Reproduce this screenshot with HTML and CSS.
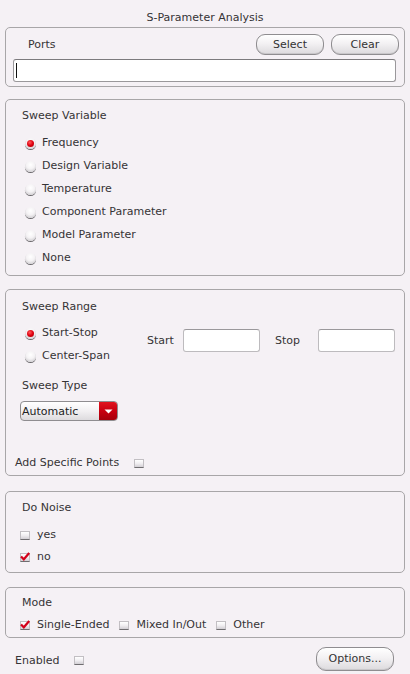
FILE: index.html
```html
<!DOCTYPE html>
<html>
<head>
<meta charset="utf-8">
<link rel="stylesheet" href="styles.css">
</head>
<body>
<div class="title">S-Parameter Analysis</div>

<div class="group g-ports">
  <div class="ports-row">
    <span class="ports-label">Ports</span>
    <div class="btns">
      <div class="btn btn-sm">Select</div>
      <div class="btn btn-sm">Clear</div>
    </div>
  </div>
  <div class="field ports-field"><span class="caret"></span></div>
</div>

<div class="group g-var">
  <div class="glabel">Sweep Variable</div>
  <div class="radios">
    <div class="radio-row"><span class="radio on"></span><span>Frequency</span></div>
    <div class="radio-row"><span class="radio"></span><span>Design Variable</span></div>
    <div class="radio-row"><span class="radio"></span><span>Temperature</span></div>
    <div class="radio-row"><span class="radio"></span><span>Component Parameter</span></div>
    <div class="radio-row"><span class="radio"></span><span>Model Parameter</span></div>
    <div class="radio-row"><span class="radio"></span><span>None</span></div>
  </div>
</div>

<div class="group g-range">
  <div class="glabel">Sweep Range</div>
  <div class="range-top">
    <div class="radios range-radios">
      <div class="radio-row"><span class="radio on"></span><span>Start-Stop</span></div>
      <div class="radio-row"><span class="radio"></span><span>Center-Span</span></div>
    </div>
    <div class="range-fields">
      <span class="f-label start-l">Start</span>
      <div class="field range-field"></div>
      <span class="f-label stop-l">Stop</span>
      <div class="field range-field"></div>
    </div>
  </div>
  <div class="glabel type-label">Sweep Type</div>
  <div class="combo">
    <span class="combo-text">Automatic</span>
    <span class="combo-arrow"><svg width="9" height="5" viewBox="0 0 9 5"><path d="M0.5 0.5 L8.5 0.5 L4.5 4.5 Z" fill="#fff"/></svg></span>
  </div>
  <div class="add-row">
    <span>Add Specific Points</span>
    <span class="check add-check"></span>
  </div>
</div>

<div class="group g-noise">
  <div class="glabel">Do Noise</div>
  <div class="checks">
    <div class="check-row"><span class="check"></span><span>yes</span></div>
    <div class="check-row"><span class="check on"><svg width="10" height="9" viewBox="0 0 10 9"><path d="M1 4.5 L3.8 7.3 L9.2 1" fill="none" stroke="#d3001a" stroke-width="2.2"/></svg></span><span>no</span></div>
  </div>
</div>

<div class="group g-mode">
  <div class="glabel">Mode</div>
  <div class="mode-row">
    <div class="mode-item m1"><span class="check on"><svg width="10" height="9" viewBox="0 0 10 9"><path d="M1 4.5 L3.8 7.3 L9.2 1" fill="none" stroke="#d3001a" stroke-width="2.2"/></svg></span><span>Single-Ended</span></div>
    <div class="mode-item m2"><span class="check"></span><span>Mixed In/Out</span></div>
    <div class="mode-item m3"><span class="check"></span><span>Other</span></div>
  </div>
</div>

<div class="footer">
  <div class="enabled"><span>Enabled</span><span class="check en-check"></span></div>
  <div class="btn btn-opt">Options...</div>
</div>
</body>
</html>
```

FILE: styles.css
```css
* { box-sizing: border-box; }
html, body { margin: 0; padding: 0; }
body {
  width: 410px;
  height: 674px;
  overflow: hidden;
  background: #f5f1f5;
  font-family: "DejaVu Sans", "Liberation Sans", sans-serif;
  font-size: 11px;
  color: #363436;
  line-height: 14px;
}
.title {
  height: 27px;
  padding-top: 11px;
  text-align: center;
}
.group {
  margin: 0 5px;
  border: 1px solid #a8a6a8;
  border-radius: 5px;
}
/* Ports */
.g-ports { height: 60px; padding: 6px 5px 4px 7px; }
.ports-row { display: flex; align-items: center; justify-content: space-between; height: 21px; }
.ports-label { padding-left: 15px; }
.btns { display: flex; gap: 7px; }
.btn {
  display: flex; align-items: center; justify-content: center;
  border: 1px solid #8f8d90;
  border-radius: 9px;
  background: linear-gradient(#ffffff 0%, #f3f1f3 45%, #dcdadd 100%);
  box-shadow: inset 0 -1px 0 #c9c7ca;
  color: #333;
}
.btn-sm { width: 68px; height: 21px; }
.field {
  background: #fff;
  border: 1px solid #9a989b;
  border-top-color: #7c7a7d;
  border-radius: 3px;
}
.ports-field { margin-top: 4px; height: 23px; margin-right: 3px; position: relative; }
.caret { position: absolute; left: 2px; top: 3px; width: 1px; height: 15px; background: #111; }
/* Labels */
.glabel { padding-left: 16px; height: 14px; line-height: 16px; }
/* Sweep variable */
.g-var { height: 177px; margin-top: 12px; padding-top: 8px; }
.radios { margin-top: 9px; padding-left: 19px; }
.radio-row { display: flex; align-items: center; height: 23px; padding-top: 1px; }
.radio {
  width: 11px; height: 11px; border-radius: 50%;
  margin-right: 6px;
  background: radial-gradient(circle at 50% 35%, #ffffff 0%, #f4f2f4 45%, #d6d4d7 75%, #8e8c8f 100%);
  box-shadow: 0 1px 0 #6d6b6e;
  position: relative;
  flex: none;
}
.radio.on::after {
  content: "";
  position: absolute; left: 2px; top: 2px;
  width: 7px; height: 7px; border-radius: 50%;
  background: radial-gradient(circle at 40% 35%, #ff5a5a 0%, #e00010 50%, #9a0008 100%);
}
/* Sweep range */
.g-range { height: 187px; margin-top: 13px; padding-top: 9px; }
.range-top { display: flex; margin-top: 8px; }
.range-radios { margin-top: 0; width: 141px; flex: none; }
.range-fields { display: flex; align-items: center; margin-top: 8px; height: 23px; }
.f-label { flex: none; padding-top: 1px; }
.start-l { width: 36px; }
.stop-l { width: 43px; margin-left: 15px; }
.range-field { width: 77px; height: 23px; border-color: #bdbbbe; border-top-color: #9a989b; }
.type-label { margin-top: 11px; }
.combo {
  margin-top: 9px; margin-left: 14px;
  width: 98px; height: 20px;
  display: flex;
  border: 1px solid #8f8d90;
  border-radius: 4px;
  overflow: hidden;
  background: linear-gradient(#ffffff 0%, #f2f0f2 50%, #dddbde 100%);
}
.combo-text { flex: 1; padding-left: 1px; line-height: 19px; color: #222; }
.combo-arrow {
  width: 18px; flex: none;
  display: flex; align-items: center; justify-content: center;
  background: linear-gradient(#e0141e 0%, #c80010 50%, #a5000b 100%);
}
.add-row { display: flex; align-items: center; margin-top: 35px; height: 14px; padding-left: 9px; line-height: 16px; }
.add-check { margin-left: 15px; }
/* Checkboxes */
.check {
  width: 10px; height: 9px; flex: none;
  border: 1px solid #c2bfc3;
  border-bottom-color: #6f6d70;
  background: linear-gradient(#ffffff 0%, #f0eef1 50%, #d2cfd4 100%);
  position: relative;
}
.check svg { position: absolute; left: -1px; top: -2px; overflow: visible; }
/* Do noise */
.g-noise { height: 82px; margin-top: 15px; padding-top: 8px; }
.checks { margin-top: 10px; padding-left: 14px; }
.check-row { display: flex; align-items: center; height: 22px; }
.check-row .check { margin-right: 7px; }
/* Mode */
.g-mode { height: 51px; margin-top: 14px; padding-top: 7px; }
.mode-row { display: flex; align-items: center; height: 18px; margin-top: 7px; padding-left: 14px; }
.mode-item { display: flex; align-items: center; }
.mode-item .check { margin-right: 7px; }
.m2 { margin-left: 10px; }
.m3 { margin-left: 10px; }
/* Footer */
.footer {
  display: flex; align-items: center; justify-content: space-between;
  padding: 9px 16px 0 15px;
}
.enabled { display: flex; align-items: center; padding-top: 3px; }
.en-check { margin-left: 15px; }
.btn-opt { width: 78px; height: 24px; border-radius: 10px; }
```
